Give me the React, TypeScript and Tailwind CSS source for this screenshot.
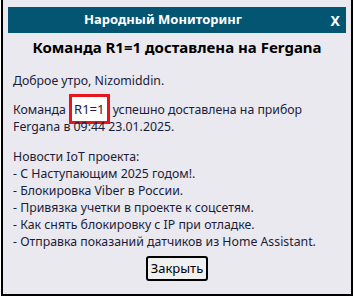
import React from "react";

const news = [
  "С Наступающим 2025 годом!.",
  "Блокировка Viber в России.",
  "Привязка учетки в проекте к соцсетям.",
  "Как снять блокировку с IP при отладке.",
  "Отправка показаний датчиков из Home Assistant.",
];

export default function App() {
  return (
    <div className="w-[356px] h-[299px] bg-white overflow-hidden" style={{ fontFamily: '"Noto Sans", "DejaVu Sans", sans-serif' }}>
      <div className="ml-[1px] w-[352px] h-[296px] bg-[#e9e9ef] border-x-2 border-b-2 border-black px-[5px] pt-[7px]">
        <div className="h-[26px] bg-[#045572] text-white flex items-center">
          <div className="flex-1 text-center text-[13px] font-bold">Народный Мониторинг</div>
          <span className="w-[28px] pr-[6px] text-right text-[14px] font-bold">X</span>
        </div>
        <h2 className="text-center font-bold text-[15px] text-black mt-[4px] leading-[20px]">
          Команда R1=1 доставлена на Fergana
        </h2>
        <div className="text-[12.3px] leading-[17px] text-[#1c1c3a] pl-[5px] mt-[15px]">
          <p>Доброе утро, Nizomiddin.</p>
          <p className="mt-[12px]">
            Команда{" "}
            <span className="border-[3px] border-[#e8141c] bg-white px-[2px] py-[3px] text-[13px]">R1=1</span>{" "}
            успешно доставлена на прибор Fergana в 09:44 23.01.2025.
          </p>
          <p className="mt-[13px]">Новости IoT проекта:</p>
          {news.map((n, i) => (
            <p key={i}>- {n}</p>
          ))}
        </div>
        <div className="flex justify-center mt-[6px]">
          <button className="h-[25px] px-[3px] border-2 border-black rounded-[3px] bg-[#f0f0f0] text-[13px] text-black">
            Закрыть
          </button>
        </div>
      </div>
    </div>
  );
}
